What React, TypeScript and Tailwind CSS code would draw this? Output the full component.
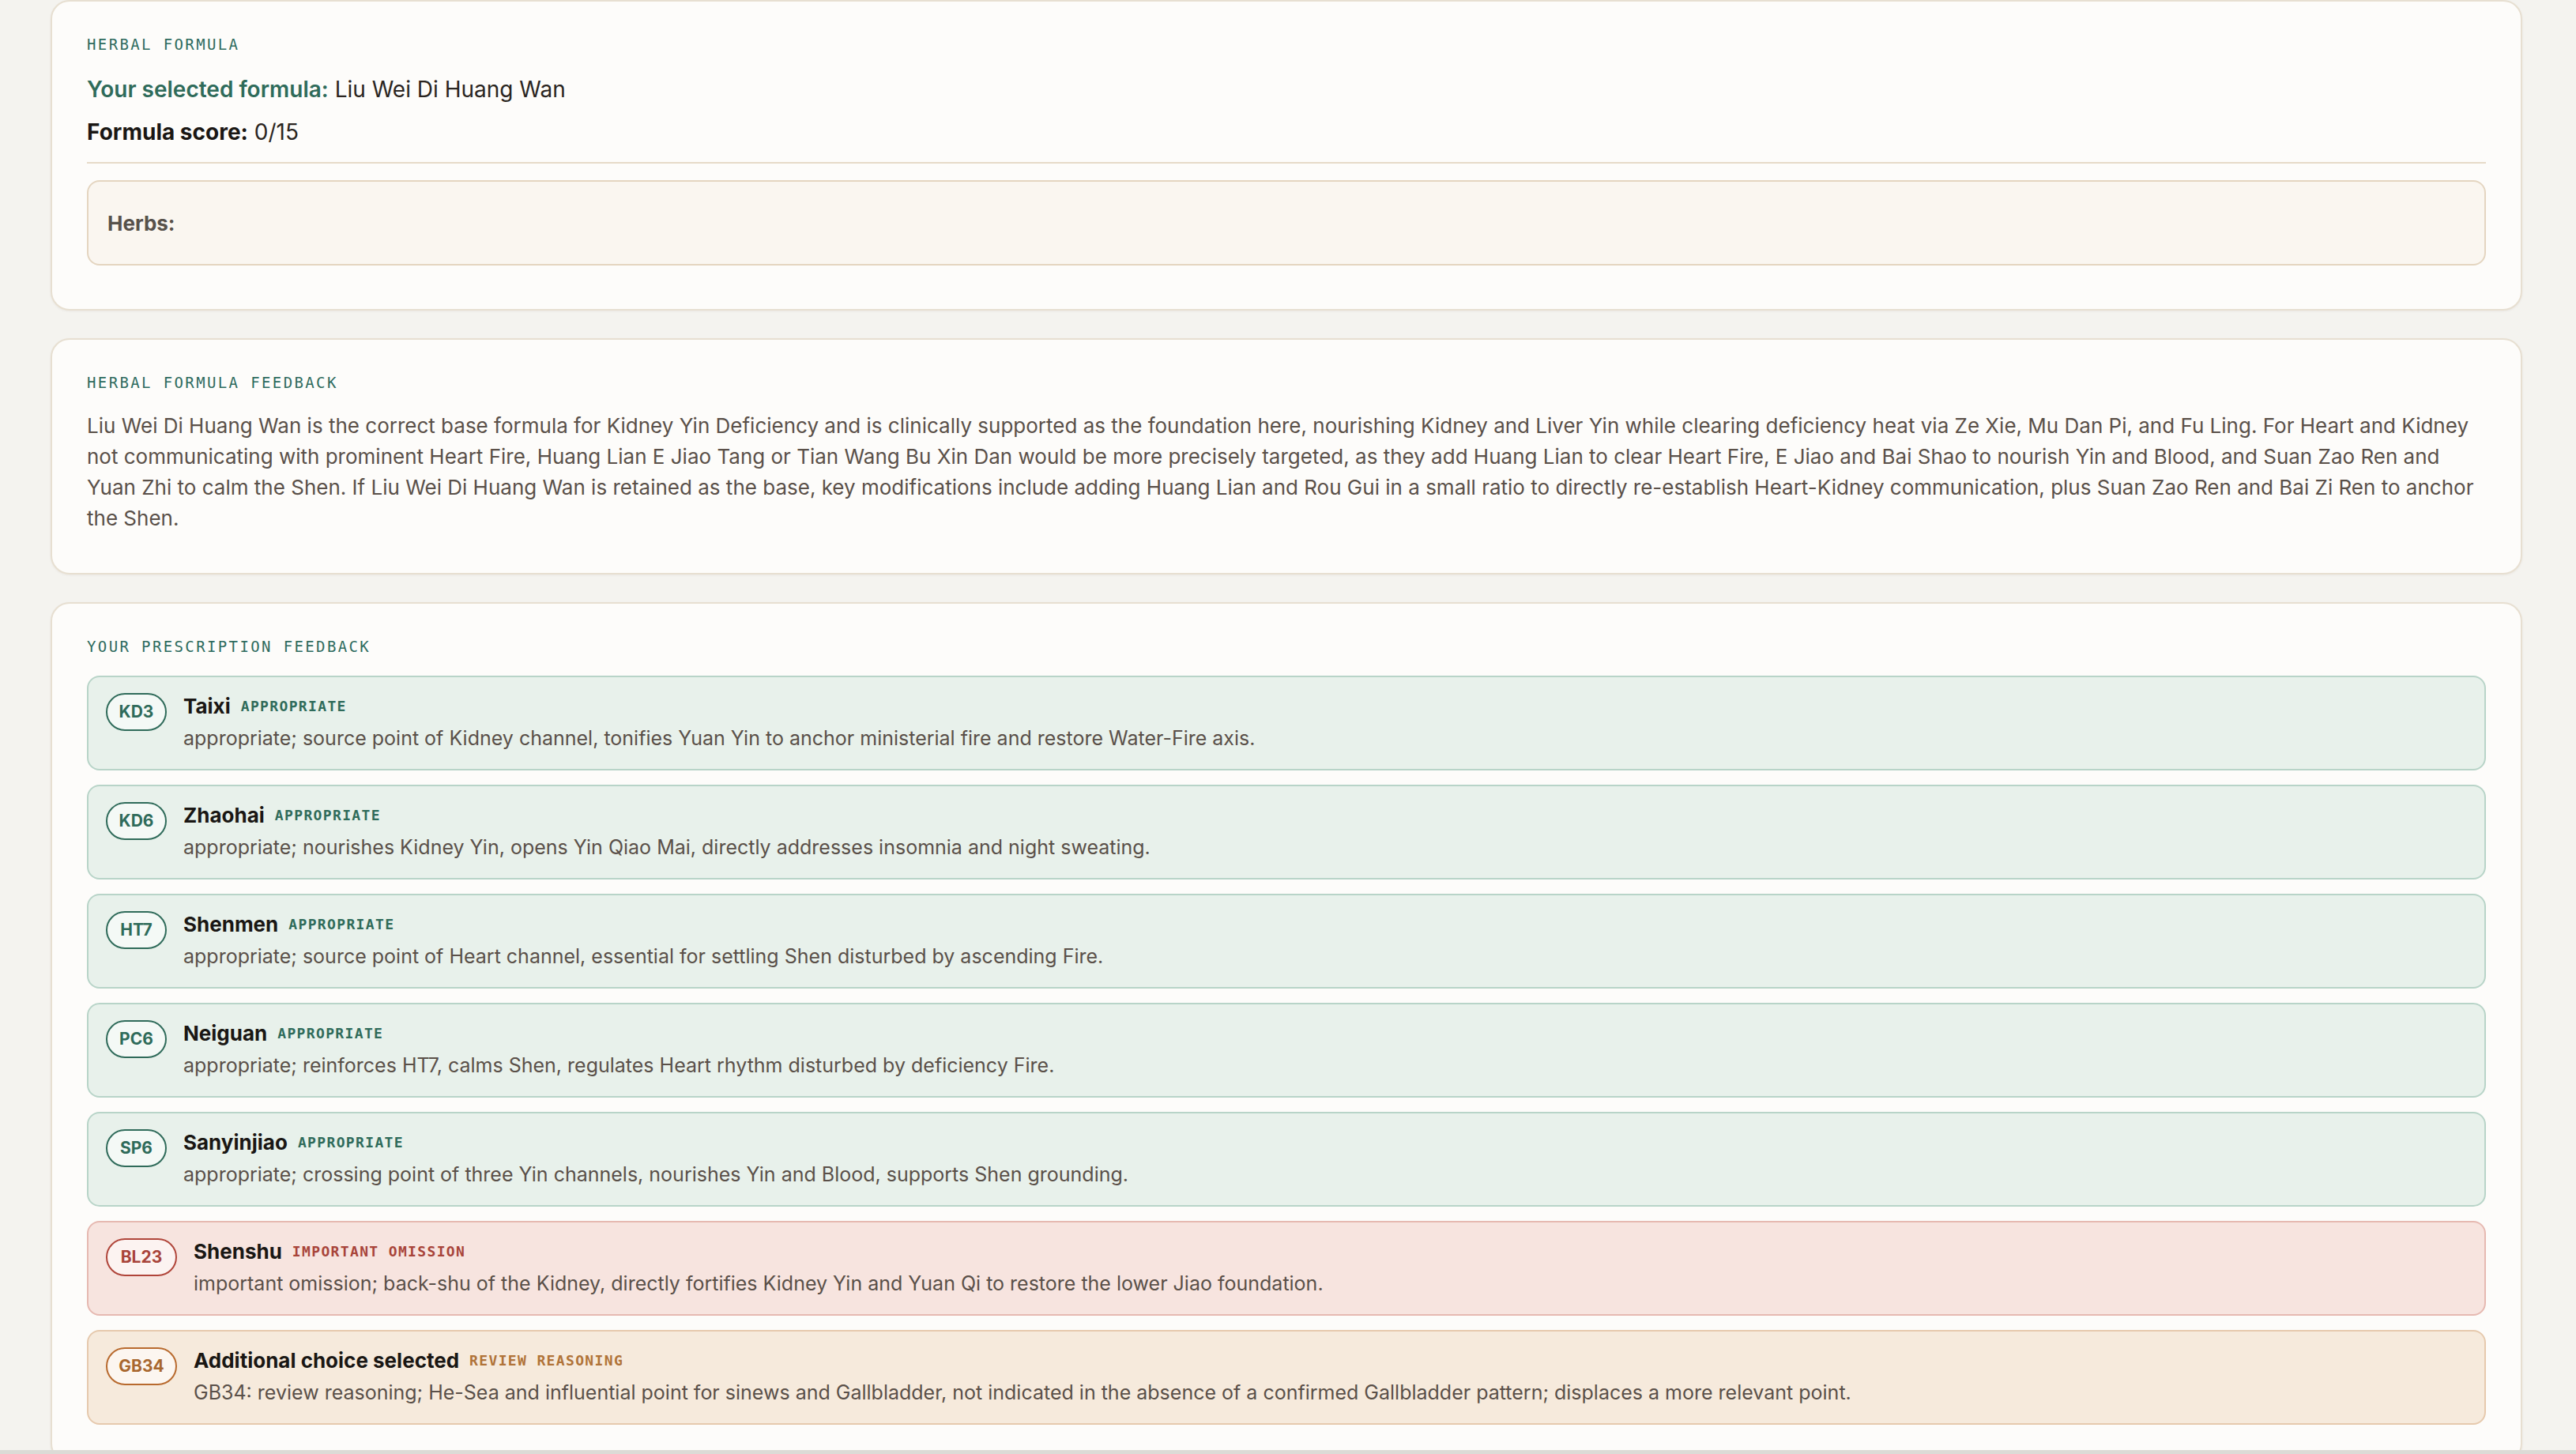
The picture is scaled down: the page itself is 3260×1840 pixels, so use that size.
import React from "react";

type Tone = "good" | "omit" | "review";

type PointFeedback = {
  code: string;
  name: string;
  tag: string;
  text: string;
  tone: Tone;
};

const points: PointFeedback[] = [
  {
    code: "KD3",
    name: "Taixi",
    tag: "APPROPRIATE",
    tone: "good",
    text: "appropriate; source point of Kidney channel, tonifies Yuan Yin to anchor ministerial fire and restore Water-Fire axis.",
  },
  {
    code: "KD6",
    name: "Zhaohai",
    tag: "APPROPRIATE",
    tone: "good",
    text: "appropriate; nourishes Kidney Yin, opens Yin Qiao Mai, directly addresses insomnia and night sweating.",
  },
  {
    code: "HT7",
    name: "Shenmen",
    tag: "APPROPRIATE",
    tone: "good",
    text: "appropriate; source point of Heart channel, essential for settling Shen disturbed by ascending Fire.",
  },
  {
    code: "PC6",
    name: "Neiguan",
    tag: "APPROPRIATE",
    tone: "good",
    text: "appropriate; reinforces HT7, calms Shen, regulates Heart rhythm disturbed by deficiency Fire.",
  },
  {
    code: "SP6",
    name: "Sanyinjiao",
    tag: "APPROPRIATE",
    tone: "good",
    text: "appropriate; crossing point of three Yin channels, nourishes Yin and Blood, supports Shen grounding.",
  },
  {
    code: "BL23",
    name: "Shenshu",
    tag: "IMPORTANT OMISSION",
    tone: "omit",
    text: "important omission; back-shu of the Kidney, directly fortifies Kidney Yin and Yuan Qi to restore the lower Jiao foundation.",
  },
  {
    code: "GB34",
    name: "Additional choice selected",
    tag: "REVIEW REASONING",
    tone: "review",
    text: "GB34: review reasoning; He-Sea and influential point for sinews and Gallbladder, not indicated in the absence of a confirmed Gallbladder pattern; displaces a more relevant point.",
  },
];

const toneStyles: Record<Tone, { box: string; badge: string; tag: string }> = {
  good: {
    box: "bg-[#e8f1eb] border-[#b8d4c8]",
    badge: "bg-[#f4f9f6] border-[#2f6b5a] text-[#2f6b5a]",
    tag: "text-[#2f6b5a]",
  },
  omit: {
    box: "bg-[#f7e4df] border-[#e6b9b1]",
    badge: "bg-[#fcf3f1] border-[#b0453a] text-[#a8443a]",
    tag: "text-[#a8443a]",
  },
  review: {
    box: "bg-[#f6eadc] border-[#e6c9ad]",
    badge: "bg-[#fcf6f0] border-[#b86a2e] text-[#a8672f]",
    tag: "text-[#b07338]",
  },
};

function SectionLabel({ children, className = "" }: { children: React.ReactNode; className?: string }) {
  return (
    <div
      className={`font-['DejaVu_Sans_Mono',monospace] text-[19px] leading-[20px] tracking-[0.125em] text-[#2e6b5e] ${className}`}
    >
      {children}
    </div>
  );
}

function Card({ children, className = "" }: { children: React.ReactNode; className?: string }) {
  return (
    <section
      className={`rounded-[24px] border-2 border-[#e7dfd1] bg-[#fdfcfa] px-[44px] pt-[44px] shadow-[0_1px_3px_rgba(60,40,20,0.06)] ${className}`}
    >
      {children}
    </section>
  );
}

function PointRow({ point }: { point: PointFeedback }) {
  const s = toneStyles[point.tone];
  const badgeWidth = point.code.length > 3 ? "w-[90px]" : "w-[77px]";
  return (
    <div className={`flex gap-[21px] rounded-[16px] border-2 pl-[22px] pr-[24px] pt-[20px] pb-[19px] ${s.box}`}>
      <div
        className={`flex h-[48px] shrink-0 items-center justify-center rounded-full border-2 text-[21px] font-bold ${badgeWidth} ${s.badge}`}
      >
        {point.code}
      </div>
      <div className="min-w-0">
        <div className="flex items-center leading-[34px]">
          <span className="text-[26px] font-bold text-[#1a1714]">{point.name}</span>
          <span
            className={`ml-[13px] font-['DejaVu_Sans_Mono',monospace] text-[18px] font-bold tracking-[0.075em] ${s.tag}`}
          >
            {point.tag}
          </span>
        </div>
        <p className="mt-[4px] text-[25px] leading-[39px] text-[#5a5049]">{point.text}</p>
      </div>
    </div>
  );
}

export default function App() {
  return (
    <div className="min-h-screen bg-[#f4f3ef] font-['Inter','Noto_Sans',sans-serif]">
      <div className="ml-16 mr-[68px] flex flex-col gap-[35px]">
        <Card className="pb-[55px]">
          <SectionLabel className="mb-[26px]">HERBAL FORMULA</SectionLabel>
          <div className="border-b-2 border-[#e6dac8] pb-[17px] text-[28px] leading-[42px] text-[#2a2521]">
            <p>
              <span className="font-semibold text-[#2f6b5a]">Your selected formula:</span> Liu Wei Di Huang Wan
            </p>
            <p className="mt-[12px]">
              <span className="font-bold text-[#1a1714]">Formula score:</span> 0/15
            </p>
          </div>
          <div className="mt-[21px] flex h-[108px] items-center rounded-[16px] border-2 border-[#e4d5c0] bg-[#faf6f0] px-[24px]">
            <span className="text-[26px] font-bold text-[#57514b]">Herbs:</span>
          </div>
        </Card>

        <Card className="pb-[50px]">
          <SectionLabel className="mb-[25px]">HERBAL FORMULA FEEDBACK</SectionLabel>
          <p className="text-[26px] leading-[39px] text-[#5a5049]">
            Liu Wei Di Huang Wan is the correct base formula for Kidney Yin Deficiency and is clinically supported as
            the foundation here, nourishing Kidney and Liver Yin while clearing deficiency heat via Ze Xie, Mu Dan Pi,
            and Fu Ling. For Heart and Kidney not communicating with prominent Heart Fire, Huang Lian E Jiao Tang or
            Tian Wang Bu Xin Dan would be more precisely targeted, as they add Huang Lian to clear Heart Fire, E Jiao
            and Bai Shao to nourish Yin and Blood, and Suan Zao Ren and Yuan Zhi to calm the Shen. If Liu Wei Di Huang
            Wan is retained as the base, key modifications include adding Huang Lian and Rou Gui in a small ratio to
            directly re-establish Heart-Kidney communication, plus Suan Zao Ren and Bai Zi Ren to anchor the Shen.
          </p>
        </Card>

        <Card className="pb-[46px]">
          <SectionLabel className="mb-[27px]">YOUR PRESCRIPTION FEEDBACK</SectionLabel>
          <div className="flex flex-col gap-[18px]">
            {points.map((p) => (
              <PointRow key={p.code} point={p} />
            ))}
          </div>
        </Card>
      </div>
      <div className="fixed inset-x-0 bottom-0 h-[5px] bg-[#dcdbd6]" />
    </div>
  );
}
